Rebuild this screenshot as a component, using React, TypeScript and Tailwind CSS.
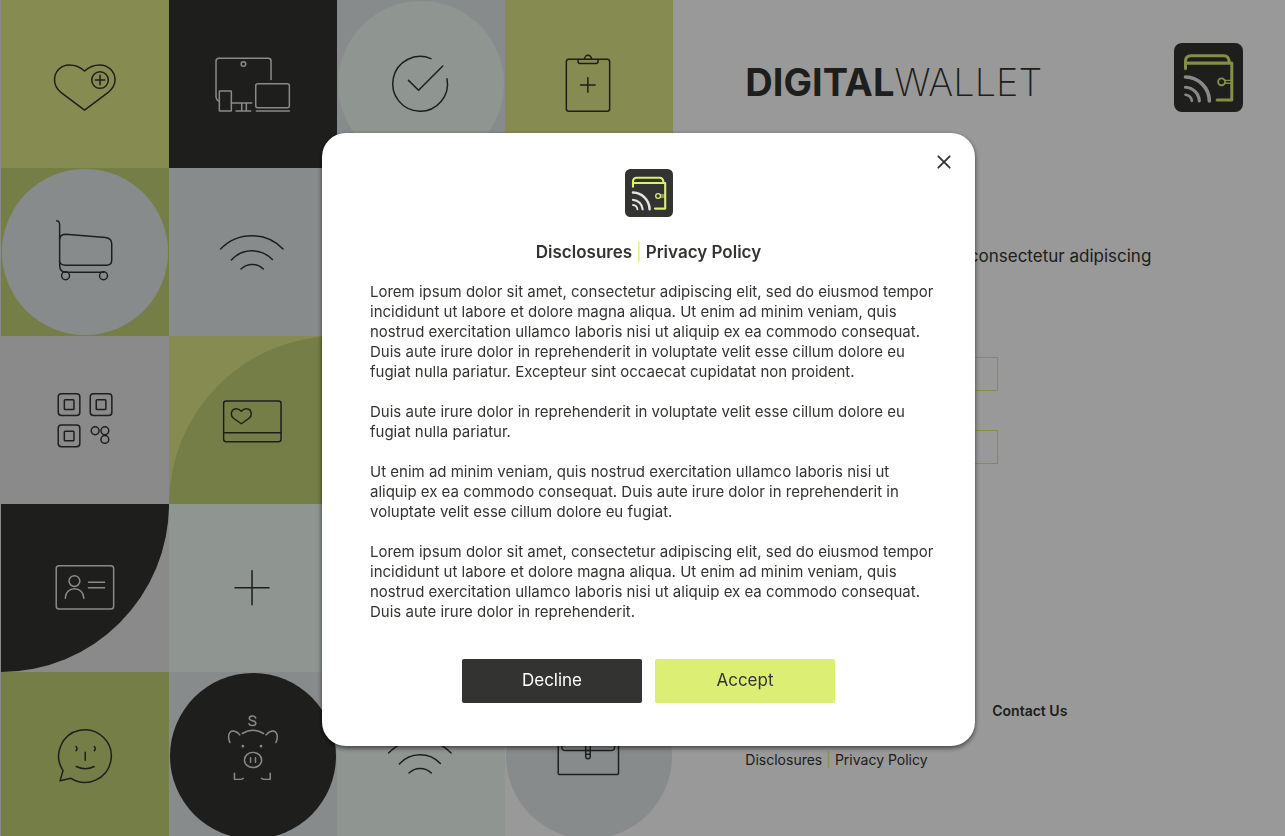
import type { ReactNode } from "react";

type TileProps = {
  className: string;
  shape?: string;
  tone?: string;
  children?: ReactNode;
};

function Tile({ className, shape = "", tone = "text-[#333331]", children }: TileProps) {
  return (
    <div className={`aspect-square overflow-hidden ${className}`}>
      <div className={`size-full ${shape}`}>
        {children && (
          <svg
            viewBox="1 0 168 168"
            className={`size-full ${tone}`}
            fill="none"
            stroke="currentColor"
            strokeWidth="1.5"
            strokeLinecap="round"
            strokeLinejoin="round"
            aria-hidden="true"
          >
            {children}
          </svg>
        )}
      </div>
    </div>
  );
}

const HeartPlus = () => (
  <>
    <path d="M84.5 71C80 67 75 65 69.5 65C60 65 54.5 72 54.5 80C54.5 85 57 89 60.5 92L84.5 110L108.5 92C112 89 115 85 115 80C115 72 109 65 99.5 65C94 65 89 67 84.5 71Z" />
    <circle cx="100" cy="80" r="8.3" />
    <path d="M95.3 80h9.4M100 75.3v9.4" />
  </>
);

const Devices = () => (
  <>
    <path d="M103 79.5V61a2.7 2.7 0 0 0-2.7-2.7H50.7A2.7 2.7 0 0 0 48 61v36q.3 3 2.5 4" />
    <circle cx="75.4" cy="64" r="2.3" />
    <rect x="51.3" y="91" width="12" height="20" rx="0.6" />
    <path d="M63.3 103h20.4M68 111h14.7M73.7 103v8M78.3 103v8" />
    <rect x="87.7" y="83.7" width="33.6" height="24" rx="2" />
    <path d="M88.3 111h33" />
  </>
);

const CheckCircle = () => (
  <>
    <path d="M95 58.3A27.7 27.7 0 1 0 111.3 78.7" />
    <path d="M72.3 80.3L82.5 90.3L107 65.8" />
  </>
);

const Clipboard = () => (
  <>
    <rect x="62.3" y="59.3" width="43.3" height="52" rx="2.5" />
    <path d="M74 59.5v2q0 2 2 2h16q2 0 2-2v-2" />
    <path d="M80.5 59.3a3.5 4 0 0 1 7 0" />
    <path d="M76.5 85h14.6M83.8 77.7v14.6" />
  </>
);

const Cart = () => (
  <>
    <path d="M56.3 52.3Q59.3 52.6 59.3 57V97Q59.5 104.5 65.5 104.5H104" />
    <path d="M59.3 70.5Q60.2 66 65.5 66L105.7 69.4Q112 70.2 112 76V92Q112 97.3 106.5 97.3H65Q60.2 97.3 59.3 93.5" />
    <circle cx="65.3" cy="108" r="4" />
    <circle cx="103.7" cy="108" r="4" />
  </>
);

const Wifi = () => (
  <path d="M52.6 81A43.2 43.2 0 0 1 115 81M63.3 92A28 28 0 0 1 104.3 91.5M73 101A15.7 15.7 0 0 1 95.3 101" />
);

const QrCode = () => (
  <>
    <rect x="58.2" y="57.8" width="21.6" height="21.6" rx="3.2" />
    <rect x="90.2" y="57.8" width="21.6" height="21.6" rx="3.2" />
    <rect x="58.2" y="89" width="21.6" height="21.6" rx="3.2" />
    <rect x="64.3" y="63.8" width="9.6" height="9.6" rx="0.8" />
    <rect x="96.2" y="63.8" width="9.6" height="9.6" rx="0.8" />
    <rect x="64.3" y="95.2" width="9.6" height="9.6" rx="0.8" />
    <circle cx="95.1" cy="94.7" r="3.9" />
    <circle cx="104.8" cy="94.7" r="3.9" />
    <circle cx="104.8" cy="103.4" r="3.9" />
  </>
);

const GiftCard = () => (
  <>
    <rect x="55.6" y="65" width="57.4" height="40.6" rx="2.5" />
    <path d="M55.6 96.6H113" />
    <path d="M73.3 75.2C71.5 73.3 70 72.7 68.3 72.7C65 72.7 63.3 75 63.3 78C63.3 80 64.3 81.2 65.5 82.2L73.3 87.7L81 82.2C82.2 81.2 83.2 80 83.2 78C83.2 75 81.5 72.7 78.2 72.7C76.5 72.7 75 73.3 73.3 75.2Z" />
  </>
);

const IdCard = () => (
  <>
    <rect x="56.2" y="61.8" width="57.4" height="43.2" rx="2.8" />
    <circle cx="74.4" cy="77" r="5.4" />
    <path d="M65.3 94.2V93.8A9.2 9.2 0 0 1 83.7 93.8V94.2M88.5 78.3h16M88.5 83.6h16" />
  </>
);

const ChatFace = () => (
  <>
    <path d="M63 98.5A26.3 26.3 0 1 1 71 106.3L60 108.8Z" />
    <path d="M76 74.5q2 2 0 4.2M94.3 74.5q2 2 0 4.2M85.2 80.2v8M76.2 94.5q9 4.4 18 0" />
  </>
);

const Pig = () => (
  <>
    <path d="M87.6 45.6q-.6-2-3.3-2q-3.1 0-3.1 2.3q0 1.8 3.2 2.3q3.5.6 3.5 2.6q0 2.4-3.5 2.4q-3 0-3.6-2" />
    <path d="M74.2 61.2Q85 54.6 95.6 61.2" />
    <path d="M71.6 62.6C68.5 58.7 64 57.7 61.8 60C59.8 62.2 60 66.4 61.6 70.4M98.2 62.6C101.3 58.7 105.8 57.7 108 60C110 62.2 109.8 66.4 108.2 70.4" />
    <circle cx="74.7" cy="74" r="0.6" />
    <circle cx="93.1" cy="74" r="0.6" />
    <ellipse cx="85" cy="88" rx="8.7" ry="7.7" />
    <path d="M82.5 85.8v4.5M87.5 85.8v4.5M66.2 101.5v6.1h5.6q2.4 0 3.2-1M102.4 101.5v6.1h-5.6q-2.4 0-3.2-1" />
  </>
);

const Purse = () => (
  <>
    <rect x="53.8" y="58" width="61" height="44.7" rx="1.2" />
    <path d="M57.5 58v17q0 3.4 3.4 3.4h46.5q3.4 0 3.4-3.4V58" />
    <path d="M81.6 66v18.4a2.3 2.3 0 0 0 4.6 0V66M81.6 78.4h4.6M81.6 82.3h4.6" />
  </>
);

function WalletLogo({ className }: { className: string }) {
  return (
    <svg viewBox="0 0 48 48" className={className} fill="none" strokeLinecap="round" role="img" aria-label="Digital Wallet">
      <rect width="48" height="48" rx="5.5" fill="#333331" />
      <g stroke="#dcee74" strokeWidth="2.1" strokeLinejoin="round">
        <path d="M8 17.8V12.6Q8 8.8 11.8 8.8H34.6Q38.2 8.8 38.5 13.6" />
        <path d="M8.4 14H40.2V39.6H30" />
        <path d="M35.3 26H39.5M35.3 28H39.5" strokeWidth="1" />
        <circle cx="33.1" cy="27" r="2.4" strokeWidth="1.3" />
      </g>
      <g stroke="#e4e4e4">
        <path d="M8 23.6A17 17 0 0 1 24.6 40.3" strokeWidth="2.5" />
        <path d="M8 30.8A10 10 0 0 1 17.6 40.3" strokeWidth="2.2" />
        <path d="M8 36A5 5 0 0 1 12.4 40.3" strokeWidth="1.8" />
      </g>
    </svg>
  );
}

function Mosaic() {
  return (
    <div className="grid w-[52.4%] shrink-0 grid-cols-4 self-start bg-[#e6e6e6] pl-px" aria-hidden="true">
      <Tile className="bg-[#dfe988]"><HeartPlus /></Tile>
      <Tile className="bg-[#333331]" tone="text-[#e6e6e6]"><Devices /></Tile>
      <Tile className="bg-[#e3e8ea] p-px" shape="rounded-full bg-[#eff8f0]"><CheckCircle /></Tile>
      <Tile className="bg-[#dfe988]"><Clipboard /></Tile>

      <Tile className="bg-[#c5d277] p-px" shape="rounded-full bg-[#e3e8ea]"><Cart /></Tile>
      <Tile className="bg-[#e3e8ea]"><Wifi /></Tile>
      <Tile className="bg-[#dfe988]" />
      <Tile className="bg-[#e6e6e6]" />

      <Tile className="bg-[#e6e6e6]"><QrCode /></Tile>
      <Tile className="bg-[#dfe988]" shape="rounded-tl-full bg-[#c5d277]"><GiftCard /></Tile>
      <Tile className="bg-[#333331]" />
      <Tile className="bg-[#eff8f0]" />

      <Tile className="bg-[#e6e6e6]" shape="rounded-br-full bg-[#333331]" tone="text-[#e6e6e6]"><IdCard /></Tile>
      <Tile className="bg-[#eff8f0]"><path d="M67 83.7h34M84 66.7v34" /></Tile>
      <Tile className="bg-[#c5d277]" />
      <Tile className="bg-[#dfe988]" />

      <Tile className="bg-[#c5d277]"><ChatFace /></Tile>
      <Tile className="bg-[#e3e8ea] p-px" shape="rounded-full bg-[#333331]" tone="text-[#e6e6e6]"><Pig /></Tile>
      <Tile className="bg-[#eff8f0]"><Wifi /></Tile>
      <Tile className="bg-white p-px" shape="rounded-full bg-[#e3e8ea]"><Purse /></Tile>
    </div>
  );
}

function Field({ label, type }: { label: string; type: string }) {
  return (
    <input type={type} aria-label={label} className="h-[34px] w-[253px] border border-[#dcee74] px-2 text-sm" />
  );
}

function SignIn() {
  return (
    <main className="flex min-w-0 flex-1 flex-col pr-[42px] pl-[72px]">
      <header className="flex h-28 items-start justify-between pt-[43px]">
        <h1 className="text-[38px] leading-[78px] whitespace-nowrap">
          <span className="font-bold">DIGITAL</span>
          <span className="font-extralight">WALLET</span>
        </h1>
        <WalletLogo className="size-[69px] shrink-0" />
      </header>
      <p className="mt-[132px] flex w-[406px] justify-end text-[17px] leading-6 whitespace-nowrap">
        Lorem ipsum dolor sit amet, consectetur adipiscing
      </p>
      <form className="mt-[89px] flex flex-col gap-[39px]">
        <Field label="Username" type="text" />
        <Field label="Password" type="password" />
      </form>
      <footer className="mt-[237px] text-sm leading-5">
        <nav className="flex w-[322px] justify-end">
          <a href="#contact" className="font-semibold">Contact Us</a>
        </nav>
        <p className="mt-[29px] flex gap-1">
          <a href="#disclosures">Disclosures</a>
          <span className="text-[#dcee74]">|</span>
          <a href="#privacy">Privacy Policy</a>
        </p>
      </footer>
    </main>
  );
}

const paragraphs = [
  `Lorem ipsum dolor sit amet, consectetur adipiscing elit, sed do eiusmod tempor
incididunt ut labore et dolore magna aliqua. Ut enim ad minim veniam, quis
nostrud exercitation ullamco laboris nisi ut aliquip ex ea commodo consequat.
Duis aute irure dolor in reprehenderit in voluptate velit esse cillum dolore eu
fugiat nulla pariatur. Excepteur sint occaecat cupidatat non proident.`,
  `Duis aute irure dolor in reprehenderit in voluptate velit esse cillum dolore eu
fugiat nulla pariatur.`,
  `Ut enim ad minim veniam, quis nostrud exercitation ullamco laboris nisi ut
aliquip ex ea commodo consequat. Duis aute irure dolor in reprehenderit in
voluptate velit esse cillum dolore eu fugiat.`,
  `Lorem ipsum dolor sit amet, consectetur adipiscing elit, sed do eiusmod tempor
incididunt ut labore et dolore magna aliqua. Ut enim ad minim veniam, quis
nostrud exercitation ullamco laboris nisi ut aliquip ex ea commodo consequat.
Duis aute irure dolor in reprehenderit.`,
];

function DisclosuresDialog() {
  return (
    <div className="fixed inset-0 flex items-start justify-center overflow-y-auto bg-black/40 pt-[133px] pl-3">
      <section
        role="dialog"
        aria-modal="true"
        aria-labelledby="dialog-title"
        className="relative flex w-full max-w-[653px] flex-col items-center rounded-3xl bg-white px-9 pt-9 pb-[43px] shadow-[0_2px_5px_rgba(0,0,0,0.6)]"
      >
        <button type="button" aria-label="Close" className="absolute top-[17px] right-[19px] flex size-6 items-center justify-center">
          <svg viewBox="0 0 24 24" className="size-6" stroke="#333331" strokeWidth="1.8" strokeLinecap="round" aria-hidden="true">
            <path d="M6.3 6.3L17.7 17.7M17.7 6.3L6.3 17.7" />
          </svg>
        </button>
        <WalletLogo className="size-12" />
        <h2 id="dialog-title" className="mt-[23px] flex gap-1 text-[17px] leading-6 font-semibold">
          <span>Disclosures</span>
          <span className="font-normal text-[#dcee74]">|</span>
          <span>Privacy Policy</span>
        </h2>
        <div className="mt-[18px] flex w-full flex-col gap-5 pl-3 text-[15px] leading-5">
          {paragraphs.map((text, index) => (
            <p key={index} className="whitespace-pre-line">{text}</p>
          ))}
        </div>
        <div className="mt-[37px] flex gap-[13px] text-[17px]">
          <button type="button" className="h-11 w-[180px] rounded-xs bg-[#333331] text-white">Decline</button>
          <button type="button" className="h-11 w-[180px] rounded-xs bg-[#dcee74]">Accept</button>
        </div>
      </section>
    </div>
  );
}

export default function App() {
  return (
    <div className="flex h-screen overflow-hidden bg-white font-[Inter,sans-serif] text-[#333331]">
      <Mosaic />
      <SignIn />
      <DisclosuresDialog />
    </div>
  );
}
